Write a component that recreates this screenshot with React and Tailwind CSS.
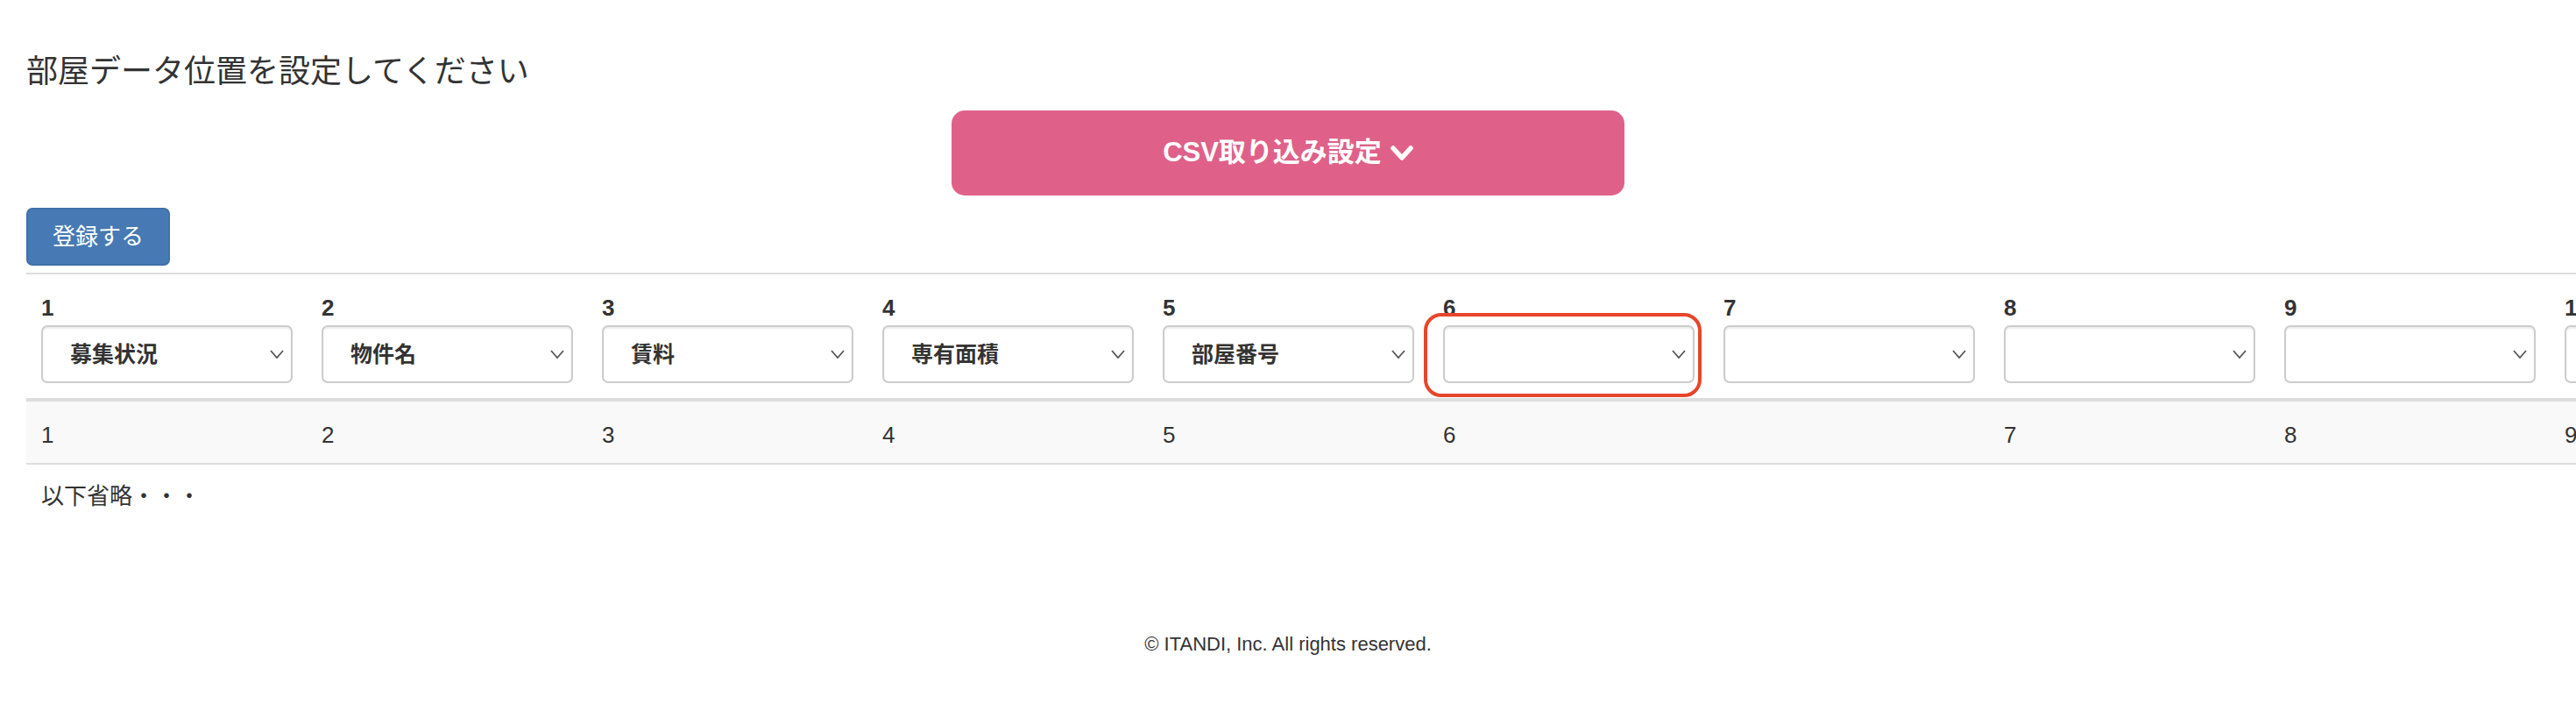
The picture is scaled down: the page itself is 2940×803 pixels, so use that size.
import React from 'react';

const FONT = "font-['Liberation_Sans','Noto_Sans_CJK_JP',sans-serif]";

// column mapping selects (header row)
const columns = [
  { no: 1, label: '募集状況' },
  { no: 2, label: '物件名' },
  { no: 3, label: '賃料' },
  { no: 4, label: '専有面積' },
  { no: 5, label: '部屋番号' },
  { no: 6, label: '', highlight: true },
  { no: 7, label: '' },
  { no: 8, label: '' },
  { no: 9, label: '' },
  { no: 10, label: '' },
  { no: 11, label: '' },
];

// sample data row, cell 6 is wider in the original
const dataCells = [
  { v: '1', w: 'w-[320px]' },
  { v: '2', w: 'w-[320px]' },
  { v: '3', w: 'w-[320px]' },
  { v: '4', w: 'w-[320px]' },
  { v: '5', w: 'w-[320px]' },
  { v: '6', w: 'w-[640px]' },
  { v: '7', w: 'w-[320px]' },
  { v: '8', w: 'w-[320px]' },
  { v: '9', w: 'w-[320px]' },
  { v: '10', w: 'w-[320px]' },
];

function FakeSelect({ label, highlight }) {
  return (
    <div className="relative w-[287px]">
      <div className="h-[66px] flex items-center justify-between pl-[31px] pr-[8px] border-2 border-[#cccccc] rounded-[7px] bg-white shadow-[inset_0_2px_2px_rgba(0,0,0,0.075)]">
        <span className="text-[25px] font-bold text-[#333333] leading-none">{label}</span>
        <svg width="16" height="10" viewBox="0 0 16 10" className="shrink-0">
          <polyline points="1,1 8,9 15,1" fill="none" stroke="#555555" strokeWidth="1.8" />
        </svg>
      </div>
      {highlight && (
        <div className="absolute left-[-22px] top-[-14px] w-[317px] h-[96px] border-[4px] border-[#e8452c] rounded-[20px] pointer-events-none" />
      )}
    </div>
  );
}

export default function App() {
  return (
    <div className={`${FONT} text-[#333333] bg-white min-h-[803px] w-full overflow-hidden`}>
      <div className="px-[30px] pt-[62px]">
        <h3 className="text-[36px] leading-[40px] font-normal">部屋データ位置を設定してください</h3>

        <div className="flex justify-center mt-[24px]">
          <button className="w-[768px] h-[97px] rounded-[15px] bg-[#df6189] text-white text-[31px] font-bold flex items-center justify-center gap-[10px]">
            <span>CSV取り込み設定</span>
            <svg width="26" height="18" viewBox="0 0 26 18">
              <polyline points="3,3 13,14 23,3" fill="none" stroke="#ffffff" strokeWidth="5.5" strokeLinecap="round" strokeLinejoin="round" />
            </svg>
          </button>
        </div>

        <button className="mt-[14px] h-[66px] px-[28px] rounded-[7px] bg-[#477ab4] border-2 border-[#3f70aa] text-white text-[26px]">
          登録する
        </button>

        <div className="mt-[8px] w-[4000px]">
          {/* header row */}
          <div className="flex border-t-2 border-[#dddddd] border-b-[4px]">
            {columns.map((c) => (
              <div key={c.no} className="w-[320px] shrink-0 pl-[17px] pt-[20px] pb-[17px]">
                <div className="text-[26px] font-bold leading-[37px]">{c.no}</div>
                <div className="mt-[1px]">
                  <FakeSelect label={c.label} highlight={c.highlight} />
                </div>
              </div>
            ))}
          </div>

          {/* data row */}
          <div className="flex bg-[#f9f9f9] border-b-2 border-[#dddddd]">
            {dataCells.map((d) => (
              <div key={d.v} className={`${d.w} shrink-0 pl-[17px] pt-[20px] pb-[13px] text-[26px] leading-[37px]`}>
                {d.v}
              </div>
            ))}
          </div>
        </div>

        <div className="pl-[17px] pt-[18px] text-[26px] leading-[37px]">以下省略・・・</div>
      </div>

      <footer className="mt-[133px] text-center text-[22px] text-[#333333]">
        © ITANDI, Inc. All rights reserved.
      </footer>
    </div>
  );
}
